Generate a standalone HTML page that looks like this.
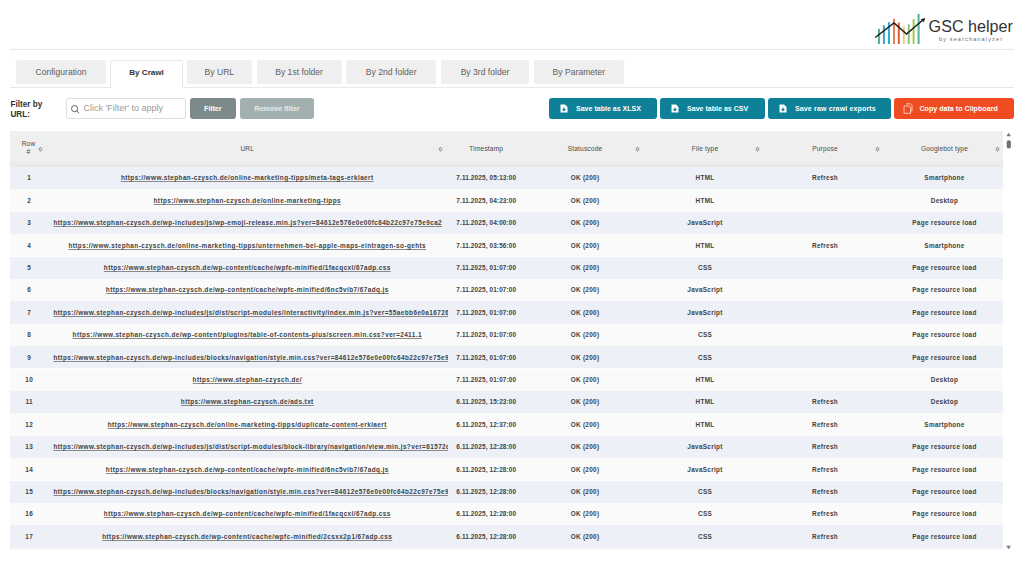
<!DOCTYPE html>
<html>
<head>
<meta charset="utf-8">
<style>
html,body{margin:0;padding:0;background:#fff;width:1024px;height:576px;overflow:hidden;}
body{font-family:"Liberation Sans",sans-serif;color:#333;position:relative;}
.abs{position:absolute;}
.hr{position:absolute;height:1px;background:#e8e8e8;}
.tab{position:absolute;top:60.2px;height:24.1px;background:#efefef;border-radius:2.5px;color:#606060;font-size:8.6px;text-align:center;line-height:24.2px;white-space:nowrap;}
.tab.active{top:60px;height:27.5px;background:#fff;border:1px solid #e6e6e6;border-bottom:none;box-sizing:border-box;color:#333;font-weight:bold;font-size:8.1px;line-height:23.4px;border-radius:2px 2px 0 0;}
.lbl{position:absolute;left:10.4px;font-weight:bold;font-size:8.2px;color:#333;line-height:10px;}
.inp{position:absolute;left:66.4px;top:98.3px;width:119.3px;height:20.3px;box-sizing:border-box;border:1px solid #dedede;border-radius:3px;background:#fff;}
.ph{position:absolute;left:83.6px;top:98.4px;height:20.3px;line-height:20.3px;font-size:9px;color:#9a9a9a;white-space:nowrap;}
.btn{position:absolute;top:98.2px;height:20.5px;border-radius:3px;color:#fff;font-weight:bold;font-size:7.05px;line-height:20.5px;white-space:nowrap;}
.btn .t{position:absolute;top:0.9px;}
.teal{background:#0e8097;}
.tbl{position:absolute;left:10px;top:131px;width:993px;height:414.8px;overflow:hidden;}
.hdr{position:absolute;left:0;top:0;width:994px;height:36px;background:#efefef;}
.hdr .band{position:absolute;left:0;top:30px;width:994px;height:6px;background:linear-gradient(#eeeeee,#e7e8ea);}
.hc{position:absolute;top:0;height:35.5px;text-align:center;color:#4a4a4a;font-size:6.6px;font-weight:normal;letter-spacing:0.17px;line-height:35.5px;}
.si{position:absolute;top:15.4px;}
.row{position:absolute;left:0;width:994px;height:22.4px;}
.odd{background:#edf0f7;}
.even{background:#fafafa;}
.c{position:absolute;top:0;height:22.4px;line-height:22.4px;padding-top:0.5px;text-align:center;white-space:nowrap;overflow:hidden;font-weight:bold;font-size:6.4px;letter-spacing:0.3px;color:#424242;box-sizing:border-box;}
.c.url{padding:0.5px 6.5px 0 6.5px;letter-spacing:0.42px;display:flex;justify-content:safe center;}
.u{text-decoration:underline;text-decoration-skip-ink:none;text-decoration-color:#8a8a8a;text-decoration-thickness:0.5px;text-underline-offset:1.2px;}
.c.ts{letter-spacing:0.14px;}
.c.num{padding-left:1.4px;}
.btm{position:absolute;left:10px;top:545.8px;width:993px;height:5px;background:linear-gradient(#eceef1,#fff);}
</style>
</head>
<body>
<!-- logo -->
<svg class="abs" style="left:870px;top:8px" width="150" height="40" viewBox="870 8 150 40">
  <g stroke-width="2" stroke-linecap="butt">
    <line x1="878.9" y1="28.8" x2="878.9" y2="44" stroke="#54ab8e"/>
    <line x1="883.9" y1="25.4" x2="883.9" y2="44" stroke="#3e9fcb"/>
    <line x1="888.9" y1="22.2" x2="888.9" y2="44" stroke="#2ba9c9"/>
    <line x1="894" y1="18.8" x2="894" y2="44" stroke="#e2805a"/>
    <line x1="898.8" y1="22.6" x2="898.8" y2="44" stroke="#e9572e"/>
    <line x1="903.8" y1="26.4" x2="903.8" y2="44" stroke="#e6cf8e"/>
    <line x1="908.75" y1="24.3" x2="908.75" y2="44" stroke="#8fc27c"/>
    <line x1="913.6" y1="19.1" x2="913.6" y2="44" stroke="#a3c94f"/>
    <line x1="918.6" y1="13.9" x2="918.6" y2="44" stroke="#4fb2a3"/>
  </g>
  <polyline points="875.2,37.5 894,22.9 906.5,34 922.5,20.3" fill="none" stroke="#1a1a1a" stroke-width="1.4" stroke-linejoin="miter"/>
  <path d="M925.2,18 L920.8,19.2 L923.9,22.2 Z" fill="#1a1a1a"/>
  <text x="928.6" y="31.8" font-family="Liberation Sans" font-size="16.7" fill="#333" textLength="84.2" lengthAdjust="spacingAndGlyphs">GSC helper</text>
  <text x="939" y="40.6" font-family="Liberation Sans" font-size="5.6" fill="#6a6a6a" textLength="63" lengthAdjust="spacing">by searchanalyzer</text>
</svg>
<div class="hr" style="left:10px;top:49px;width:1004px;"></div>

<!-- tabs -->
<div class="hr" style="left:10px;top:87px;width:1004px;"></div>
<div class="tab" style="left:16.2px;width:89.6px;">Configuration</div>
<div class="tab active" style="left:110.3px;width:72.5px;">By Crawl</div>
<div class="tab" style="left:186.8px;width:65.1px;">By URL</div>
<div class="tab" style="left:256.5px;width:85.2px;">By 1st folder</div>
<div class="tab" style="left:346.4px;width:89.6px;">By 2nd folder</div>
<div class="tab" style="left:441px;width:88px;">By 3rd folder</div>
<div class="tab" style="left:533.7px;width:90.4px;">By Parameter</div>

<!-- filter -->
<div class="lbl" style="top:99.9px;">Filter by<br>URL:</div>
<div class="inp"></div>
<svg class="abs" style="left:70px;top:104px" width="11" height="10" viewBox="0 0 11 10"><circle cx="4.6" cy="4.6" r="3.1" fill="none" stroke="#555" stroke-width="0.9"/><line x1="6.9" y1="6.9" x2="9" y2="9" stroke="#555" stroke-width="0.9" stroke-linecap="round"/></svg>
<div class="ph">Click 'Filter' to apply</div>
<div class="btn" style="left:190px;width:45.8px;background:#7d8a8a;"><span class="t" style="left:14px;font-size:7.2px;">Filter</span></div>
<div class="btn" style="left:240.1px;width:73.7px;background:#a3b0b0;color:#e6ecec;"><span class="t" style="left:14.4px;font-size:7.13px;">Remove filter</span></div>

<!-- action buttons -->
<div class="btn teal" style="left:549.1px;width:108.1px;">
  <svg class="abs" style="left:10.9px;top:5.8px" width="8" height="9" viewBox="0 0 8 9"><path d="M0.5 0.5H5L7.5 3V8.5H0.5Z" fill="#fff"/><path d="M4 3.6V6.4M2.6 5.1L4 6.6L5.4 5.1" stroke="#0e8097" stroke-width="1.1" fill="none"/></svg>
  <span class="t" style="left:26.9px;">Save table as XLSX</span></div>
<div class="btn teal" style="left:660.2px;width:104.8px;">
  <svg class="abs" style="left:10.9px;top:5.8px" width="8" height="9" viewBox="0 0 8 9"><path d="M0.5 0.5H5L7.5 3V8.5H0.5Z" fill="#fff"/><path d="M4 3.6V6.4M2.6 5.1L4 6.6L5.4 5.1" stroke="#0e8097" stroke-width="1.1" fill="none"/></svg>
  <span class="t" style="left:26.9px;">Save table as CSV</span></div>
<div class="btn teal" style="left:768px;width:123px;">
  <svg class="abs" style="left:10.9px;top:5.8px" width="8" height="9" viewBox="0 0 8 9"><path d="M0.5 0.5H5L7.5 3V8.5H0.5Z" fill="#fff"/><path d="M4 3.6V6.4M2.6 5.1L4 6.6L5.4 5.1" stroke="#0e8097" stroke-width="1.1" fill="none"/></svg>
  <span class="t" style="left:26.9px;letter-spacing:0.14px;">Save raw crawl exports</span></div>
<div class="btn" style="left:894px;width:119.6px;background:#f04b21;">
  <svg class="abs" style="left:8.5px;top:5px" width="10" height="11" viewBox="0 0 10 11"><path d="M3.5 1.5V0.8H7.5L9 2.3V8H7.5" fill="none" stroke="#fbd3c6" stroke-width="0.9"/><path d="M1 3H6L7.5 4.5V10.3H1Z" fill="none" stroke="#fbd3c6" stroke-width="0.9"/></svg>
  <span class="t" style="left:25.4px;font-size:7.14px;">Copy data to Clipboard</span></div>

<!-- table -->
<div class="tbl">
  <div class="hdr"><div class="band"></div>
    <div class="hc" style="left:0;width:37px;line-height:8px;padding-top:9px;height:auto;">Row<br>#</div>
    <svg class="si" style="left:28.4px" width="5" height="6" viewBox="0 0 5 6"><path d="M2.5 1.1L3.9 3.2L2.5 5.3L1.1 3.2Z" fill="none" stroke="#6f6f6f" stroke-width="0.8"/></svg>
    <div class="hc" style="left:37px;width:400.5px;">URL</div>
    <svg class="si" style="left:427.5px" width="5" height="6" viewBox="0 0 5 6"><path d="M2.5 1.1L3.9 3.2L2.5 5.3L1.1 3.2Z" fill="none" stroke="#6f6f6f" stroke-width="0.8"/></svg>
    <div class="hc" style="left:437.5px;width:77.5px;">Timestamp</div>
    <div class="hc" style="left:515px;width:120px;">Statuscode</div>
    <svg class="si" style="left:625px" width="5" height="6" viewBox="0 0 5 6"><path d="M2.5 1.1L3.9 3.2L2.5 5.3L1.1 3.2Z" fill="none" stroke="#6f6f6f" stroke-width="0.8"/></svg>
    <div class="hc" style="left:635px;width:120px;">File type</div>
    <svg class="si" style="left:744.5px" width="5" height="6" viewBox="0 0 5 6"><path d="M2.5 1.1L3.9 3.2L2.5 5.3L1.1 3.2Z" fill="none" stroke="#6f6f6f" stroke-width="0.8"/></svg>
    <div class="hc" style="left:755px;width:120px;">Purpose</div>
    <svg class="si" style="left:865px" width="5" height="6" viewBox="0 0 5 6"><path d="M2.5 1.1L3.9 3.2L2.5 5.3L1.1 3.2Z" fill="none" stroke="#6f6f6f" stroke-width="0.8"/></svg>
    <div class="hc" style="left:875px;width:119px;">Googlebot type</div>
    <svg class="si" style="left:984.5px" width="5" height="6" viewBox="0 0 5 6"><path d="M2.5 1.1L3.9 3.2L2.5 5.3L1.1 3.2Z" fill="none" stroke="#6f6f6f" stroke-width="0.8"/></svg>
  </div>
<div class="row odd" style="top:35.9px"><div class="c num" style="left:0.0px;width:37.0px">1</div><div class="c url" style="left:37.0px;width:400.5px"><span class="u">https://www.stephan-czysch.de/online-marketing-tipps/meta-tags-erklaert</span></div><div class="c ts" style="left:437.5px;width:77.5px">7.11.2025, 05:13:00</div><div class="c st" style="left:515.0px;width:120.0px">OK (200)</div><div class="c ft" style="left:635.0px;width:120.0px">HTML</div><div class="c pu" style="left:755.0px;width:120.0px">Refresh</div><div class="c gb" style="left:875.0px;width:119.0px">Smartphone</div></div>
<div class="row even" style="top:58.3px"><div class="c num" style="left:0.0px;width:37.0px">2</div><div class="c url" style="left:37.0px;width:400.5px"><span class="u">https://www.stephan-czysch.de/online-marketing-tipps</span></div><div class="c ts" style="left:437.5px;width:77.5px">7.11.2025, 04:23:00</div><div class="c st" style="left:515.0px;width:120.0px">OK (200)</div><div class="c ft" style="left:635.0px;width:120.0px">HTML</div><div class="c pu" style="left:755.0px;width:120.0px"></div><div class="c gb" style="left:875.0px;width:119.0px">Desktop</div></div>
<div class="row odd" style="top:80.7px"><div class="c num" style="left:0.0px;width:37.0px">3</div><div class="c url" style="left:37.0px;width:400.5px"><span class="u">https://www.stephan-czysch.de/wp-includes/js/wp-emoji-release.min.js?ver=84612e576e0e00fc64b22c97e75e9ca2</span></div><div class="c ts" style="left:437.5px;width:77.5px">7.11.2025, 04:00:00</div><div class="c st" style="left:515.0px;width:120.0px">OK (200)</div><div class="c ft" style="left:635.0px;width:120.0px">JavaScript</div><div class="c pu" style="left:755.0px;width:120.0px"></div><div class="c gb" style="left:875.0px;width:119.0px">Page resource load</div></div>
<div class="row even" style="top:103.1px"><div class="c num" style="left:0.0px;width:37.0px">4</div><div class="c url" style="left:37.0px;width:400.5px"><span class="u">https://www.stephan-czysch.de/online-marketing-tipps/unternehmen-bei-apple-maps-eintragen-so-gehts</span></div><div class="c ts" style="left:437.5px;width:77.5px">7.11.2025, 03:56:00</div><div class="c st" style="left:515.0px;width:120.0px">OK (200)</div><div class="c ft" style="left:635.0px;width:120.0px">HTML</div><div class="c pu" style="left:755.0px;width:120.0px">Refresh</div><div class="c gb" style="left:875.0px;width:119.0px">Smartphone</div></div>
<div class="row odd" style="top:125.5px"><div class="c num" style="left:0.0px;width:37.0px">5</div><div class="c url" style="left:37.0px;width:400.5px"><span class="u">https://www.stephan-czysch.de/wp-content/cache/wpfc-minified/1facqcxl/67adp.css</span></div><div class="c ts" style="left:437.5px;width:77.5px">7.11.2025, 01:07:00</div><div class="c st" style="left:515.0px;width:120.0px">OK (200)</div><div class="c ft" style="left:635.0px;width:120.0px">CSS</div><div class="c pu" style="left:755.0px;width:120.0px"></div><div class="c gb" style="left:875.0px;width:119.0px">Page resource load</div></div>
<div class="row even" style="top:147.9px"><div class="c num" style="left:0.0px;width:37.0px">6</div><div class="c url" style="left:37.0px;width:400.5px"><span class="u">https://www.stephan-czysch.de/wp-content/cache/wpfc-minified/6nc5vib7/67adq.js</span></div><div class="c ts" style="left:437.5px;width:77.5px">7.11.2025, 01:07:00</div><div class="c st" style="left:515.0px;width:120.0px">OK (200)</div><div class="c ft" style="left:635.0px;width:120.0px">JavaScript</div><div class="c pu" style="left:755.0px;width:120.0px"></div><div class="c gb" style="left:875.0px;width:119.0px">Page resource load</div></div>
<div class="row odd" style="top:170.3px"><div class="c num" style="left:0.0px;width:37.0px">7</div><div class="c url" style="left:37.0px;width:400.5px"><span class="u">https://www.stephan-czysch.de/wp-includes/js/dist/script-modules/interactivity/index.min.js?ver=55aebb6e0a16726b7713</span></div><div class="c ts" style="left:437.5px;width:77.5px">7.11.2025, 01:07:00</div><div class="c st" style="left:515.0px;width:120.0px">OK (200)</div><div class="c ft" style="left:635.0px;width:120.0px">JavaScript</div><div class="c pu" style="left:755.0px;width:120.0px"></div><div class="c gb" style="left:875.0px;width:119.0px">Page resource load</div></div>
<div class="row even" style="top:192.7px"><div class="c num" style="left:0.0px;width:37.0px">8</div><div class="c url" style="left:37.0px;width:400.5px"><span class="u">https://www.stephan-czysch.de/wp-content/plugins/table-of-contents-plus/screen.min.css?ver=2411.1</span></div><div class="c ts" style="left:437.5px;width:77.5px">7.11.2025, 01:07:00</div><div class="c st" style="left:515.0px;width:120.0px">OK (200)</div><div class="c ft" style="left:635.0px;width:120.0px">CSS</div><div class="c pu" style="left:755.0px;width:120.0px"></div><div class="c gb" style="left:875.0px;width:119.0px">Page resource load</div></div>
<div class="row odd" style="top:215.1px"><div class="c num" style="left:0.0px;width:37.0px">9</div><div class="c url" style="left:37.0px;width:400.5px"><span class="u">https://www.stephan-czysch.de/wp-includes/blocks/navigation/style.min.css?ver=84612e576e0e00fc64b22c97e75e9ca2</span></div><div class="c ts" style="left:437.5px;width:77.5px">7.11.2025, 01:07:00</div><div class="c st" style="left:515.0px;width:120.0px">OK (200)</div><div class="c ft" style="left:635.0px;width:120.0px">CSS</div><div class="c pu" style="left:755.0px;width:120.0px"></div><div class="c gb" style="left:875.0px;width:119.0px">Page resource load</div></div>
<div class="row even" style="top:237.5px"><div class="c num" style="left:0.0px;width:37.0px">10</div><div class="c url" style="left:37.0px;width:400.5px"><span class="u">https://www.stephan-czysch.de/</span></div><div class="c ts" style="left:437.5px;width:77.5px">7.11.2025, 01:07:00</div><div class="c st" style="left:515.0px;width:120.0px">OK (200)</div><div class="c ft" style="left:635.0px;width:120.0px">HTML</div><div class="c pu" style="left:755.0px;width:120.0px"></div><div class="c gb" style="left:875.0px;width:119.0px">Desktop</div></div>
<div class="row odd" style="top:259.9px"><div class="c num" style="left:0.0px;width:37.0px">11</div><div class="c url" style="left:37.0px;width:400.5px"><span class="u">https://www.stephan-czysch.de/ads.txt</span></div><div class="c ts" style="left:437.5px;width:77.5px">6.11.2025, 15:23:00</div><div class="c st" style="left:515.0px;width:120.0px">OK (200)</div><div class="c ft" style="left:635.0px;width:120.0px">HTML</div><div class="c pu" style="left:755.0px;width:120.0px">Refresh</div><div class="c gb" style="left:875.0px;width:119.0px">Desktop</div></div>
<div class="row even" style="top:282.3px"><div class="c num" style="left:0.0px;width:37.0px">12</div><div class="c url" style="left:37.0px;width:400.5px"><span class="u">https://www.stephan-czysch.de/online-marketing-tipps/duplicate-content-erklaert</span></div><div class="c ts" style="left:437.5px;width:77.5px">6.11.2025, 12:37:00</div><div class="c st" style="left:515.0px;width:120.0px">OK (200)</div><div class="c ft" style="left:635.0px;width:120.0px">HTML</div><div class="c pu" style="left:755.0px;width:120.0px">Refresh</div><div class="c gb" style="left:875.0px;width:119.0px">Smartphone</div></div>
<div class="row odd" style="top:304.7px"><div class="c num" style="left:0.0px;width:37.0px">13</div><div class="c url" style="left:37.0px;width:400.5px"><span class="u">https://www.stephan-czysch.de/wp-includes/js/dist/script-modules/block-library/navigation/view.min.js?ver=61572d447d3ae</span></div><div class="c ts" style="left:437.5px;width:77.5px">6.11.2025, 12:28:00</div><div class="c st" style="left:515.0px;width:120.0px">OK (200)</div><div class="c ft" style="left:635.0px;width:120.0px">JavaScript</div><div class="c pu" style="left:755.0px;width:120.0px">Refresh</div><div class="c gb" style="left:875.0px;width:119.0px">Page resource load</div></div>
<div class="row even" style="top:327.1px"><div class="c num" style="left:0.0px;width:37.0px">14</div><div class="c url" style="left:37.0px;width:400.5px"><span class="u">https://www.stephan-czysch.de/wp-content/cache/wpfc-minified/6nc5vib7/67adq.js</span></div><div class="c ts" style="left:437.5px;width:77.5px">6.11.2025, 12:28:00</div><div class="c st" style="left:515.0px;width:120.0px">OK (200)</div><div class="c ft" style="left:635.0px;width:120.0px">JavaScript</div><div class="c pu" style="left:755.0px;width:120.0px">Refresh</div><div class="c gb" style="left:875.0px;width:119.0px">Page resource load</div></div>
<div class="row odd" style="top:349.5px"><div class="c num" style="left:0.0px;width:37.0px">15</div><div class="c url" style="left:37.0px;width:400.5px"><span class="u">https://www.stephan-czysch.de/wp-includes/blocks/navigation/style.min.css?ver=84612e576e0e00fc64b22c97e75e9ca2</span></div><div class="c ts" style="left:437.5px;width:77.5px">6.11.2025, 12:28:00</div><div class="c st" style="left:515.0px;width:120.0px">OK (200)</div><div class="c ft" style="left:635.0px;width:120.0px">CSS</div><div class="c pu" style="left:755.0px;width:120.0px">Refresh</div><div class="c gb" style="left:875.0px;width:119.0px">Page resource load</div></div>
<div class="row even" style="top:371.9px"><div class="c num" style="left:0.0px;width:37.0px">16</div><div class="c url" style="left:37.0px;width:400.5px"><span class="u">https://www.stephan-czysch.de/wp-content/cache/wpfc-minified/1facqcxl/67adp.css</span></div><div class="c ts" style="left:437.5px;width:77.5px">6.11.2025, 12:28:00</div><div class="c st" style="left:515.0px;width:120.0px">OK (200)</div><div class="c ft" style="left:635.0px;width:120.0px">CSS</div><div class="c pu" style="left:755.0px;width:120.0px">Refresh</div><div class="c gb" style="left:875.0px;width:119.0px">Page resource load</div></div>
<div class="row odd" style="top:394.3px"><div class="c num" style="left:0.0px;width:37.0px">17</div><div class="c url" style="left:37.0px;width:400.5px"><span class="u">https://www.stephan-czysch.de/wp-content/cache/wpfc-minified/2csxx2p1/67adp.css</span></div><div class="c ts" style="left:437.5px;width:77.5px">6.11.2025, 12:28:00</div><div class="c st" style="left:515.0px;width:120.0px">OK (200)</div><div class="c ft" style="left:635.0px;width:120.0px">CSS</div><div class="c pu" style="left:755.0px;width:120.0px">Refresh</div><div class="c gb" style="left:875.0px;width:119.0px">Page resource load</div></div>
</div>

<div class="btm"></div>
<!-- scrollbar -->
<svg class="abs" style="left:1004px;top:130px" width="10" height="422" viewBox="0 0 10 422">
  <path d="M4.7 2.8L7 6.2H2.4Z" fill="#777"/>
  <rect x="2.7" y="10.2" width="4.2" height="8.2" rx="2" fill="#707070"/>
  <path d="M4.6 419.2L6.9 415.8H2.3Z" fill="#777"/>
</svg>
</body>
</html>
